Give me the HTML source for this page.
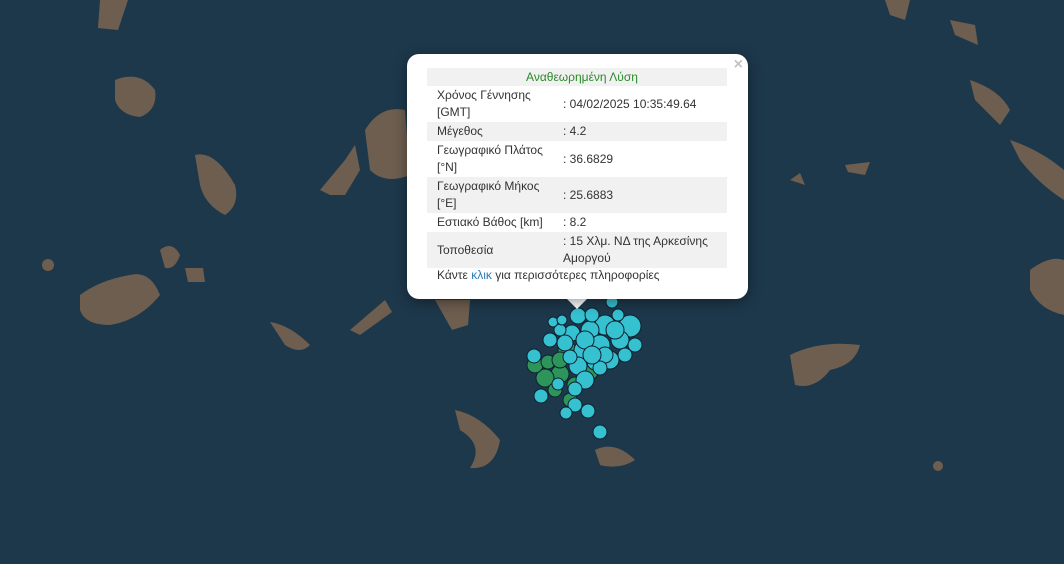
<!DOCTYPE html>
<html><head><meta charset="utf-8"><style>
html,body{margin:0;padding:0;width:1064px;height:564px;overflow:hidden;background:#1d384b;font-family:"Liberation Sans",Arial,sans-serif}
#map{position:absolute;left:0;top:0}
.pop{position:absolute;left:407px;top:54px;width:341px;height:245px;background:#fff;border-radius:12px;box-shadow:0 3px 14px rgba(0,0,0,.4)}
.tip{position:absolute;left:566px;top:298px;width:0;height:0;border-left:11px solid transparent;border-right:11px solid transparent;border-top:11px solid #fff}
.x{position:absolute;right:5px;top:2px;color:#c3c3c3;font:bold 16px "Liberation Sans",sans-serif}
table{position:absolute;left:20px;top:14px;width:300px;border-collapse:collapse;font-size:12px;color:#333;line-height:17px}
td{padding:1px 0 1px 10px;vertical-align:middle}
td.v{padding-left:2px}
tr.g td{background:#f1f1f1}
.hd{text-align:center;color:#2a8a2a;height:16px;line-height:16px}
.ft{position:absolute;left:30px;top:214px;font-size:12px;color:#333}
.ft span{color:#2a7bb5}
</style></head><body>
<svg id="map" width="1064" height="564" xmlns="http://www.w3.org/2000/svg">
<g fill="#7d6550" opacity="0.85">
<path d="M365 130 Q380 105 405 110 L410 175 Q385 185 370 170 Z"/>
<path d="M320 190 L345 160 L355 145 L360 170 L345 195 L330 195 Z"/>
<path d="M195 155 Q215 150 235 185 Q240 205 225 215 Q205 205 200 185 Z"/>
<path d="M115 80 Q140 70 155 90 Q158 110 140 117 Q120 115 115 100 Z"/>
<path d="M80 295 Q100 280 130 275 Q150 270 160 295 Q140 320 110 325 Q85 325 80 310 Z"/>
<path d="M160 250 Q172 240 180 255 Q175 270 165 268 Z"/>
<path d="M185 268 L203 268 L205 282 L188 282 Z"/>
<path d="M270 322 Q290 325 310 345 Q300 355 285 345 Z"/>
<path d="M350 330 L385 300 L392 312 L360 335 Z"/>
<path d="M435 300 L470 300 L468 325 L452 330 Z"/>
<path d="M455 410 Q480 415 500 440 Q495 470 470 468 Q485 445 460 430 Z"/>
<path d="M595 450 Q615 440 635 460 Q620 470 600 465 Z"/>
<path d="M790 355 Q820 340 860 345 Q855 365 830 370 Q815 390 795 385 Z"/>
<path d="M970 80 Q1000 90 1010 110 L1000 125 Q985 110 975 100 Z"/>
<path d="M1010 140 Q1040 150 1064 170 L1064 200 Q1040 185 1020 160 Z"/>
<path d="M1030 270 Q1050 255 1064 260 L1064 315 Q1040 310 1030 290 Z"/>
<path d="M885 0 L910 0 L905 20 L890 15 Z"/>
<path d="M950 20 L975 25 L978 45 L955 35 Z"/>
<path d="M100 0 L128 0 L118 30 L98 28 Z"/>
<path d="M790 180 L800 173 L805 185 Z"/>
<path d="M845 165 L870 162 L865 175 L848 172 Z"/>
<circle cx="938" cy="466" r="5"/>
<circle cx="48" cy="265" r="6"/>
</g>
<g stroke="#0e2030" stroke-width="1" opacity="0.95">
<g fill="#2e9a5a">
<circle cx="560" cy="374" r="9"/><circle cx="545" cy="378" r="9"/><circle cx="535" cy="365" r="8"/><circle cx="575" cy="385" r="8"/><circle cx="555" cy="390" r="7"/><circle cx="567" cy="350" r="9"/><circle cx="590" cy="372" r="8"/><circle cx="570" cy="400" r="7"/><circle cx="548" cy="362" r="7"/><circle cx="560" cy="360" r="8"/>
</g>
<g fill="#38c9d8">
<circle cx="578" cy="316" r="8"/><circle cx="612" cy="302" r="6"/><circle cx="630" cy="326" r="11"/><circle cx="605" cy="325" r="10"/><circle cx="590" cy="330" r="9"/><circle cx="572" cy="333" r="8"/><circle cx="560" cy="330" r="6"/><circle cx="553" cy="322" r="5"/><circle cx="620" cy="340" r="9"/><circle cx="600" cy="345" r="10"/><circle cx="583" cy="350" r="9"/><circle cx="565" cy="343" r="8"/><circle cx="550" cy="340" r="7"/><circle cx="635" cy="345" r="7"/><circle cx="610" cy="360" r="9"/><circle cx="595" cy="362" r="8"/><circle cx="578" cy="366" r="9"/><circle cx="605" cy="355" r="8"/><circle cx="570" cy="357" r="7"/><circle cx="585" cy="380" r="9"/><circle cx="600" cy="368" r="7"/><circle cx="534" cy="356" r="7"/><circle cx="575" cy="389" r="7"/><circle cx="558" cy="384" r="6"/><circle cx="541" cy="396" r="7"/><circle cx="575" cy="405" r="7"/><circle cx="588" cy="411" r="7"/><circle cx="566" cy="413" r="6"/><circle cx="600" cy="432" r="7"/><circle cx="562" cy="320" r="5"/><circle cx="618" cy="315" r="6"/><circle cx="592" cy="315" r="7"/><circle cx="615" cy="330" r="9"/><circle cx="585" cy="340" r="9"/><circle cx="625" cy="355" r="7"/><circle cx="592" cy="355" r="9"/>
</g>
</g>
</svg>
<div class="tip"></div>
<div class="pop"><div class="x">×</div>
<table>
<tr class="g"><td colspan="2" class="hd">Αναθεωρημένη Λύση</td></tr>
<tr><td style="width:124px">Χρόνος Γέννησης<br>[GMT]</td><td class="v">: 04/02/2025 10:35:49.64</td></tr>
<tr class="g"><td>Μέγεθος</td><td class="v">: 4.2</td></tr>
<tr><td>Γεωγραφικό Πλάτος<br>[°N]</td><td class="v">: 36.6829</td></tr>
<tr class="g"><td>Γεωγραφικό Μήκος<br>[°E]</td><td class="v">: 25.6883</td></tr>
<tr><td>Εστιακό Βάθος [km]</td><td class="v">: 8.2</td></tr>
<tr class="g"><td>Τοποθεσία</td><td class="v">: 15 Χλμ. ΝΔ της Αρκεσίνης<br>Αμοργού</td></tr>
</table>
<div class="ft">Κάντε <span>κλικ</span> για περισσότερες πληροφορίες</div>
</div>
</body></html>
